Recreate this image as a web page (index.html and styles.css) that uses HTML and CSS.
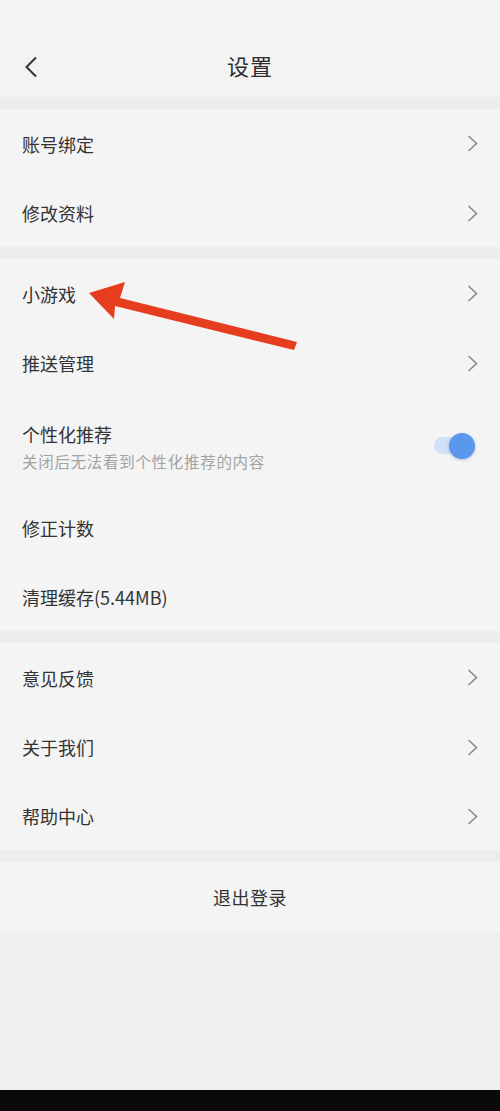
FILE: index.html
```html
<!DOCTYPE html>
<html lang="zh-CN">
<head>
<meta charset="utf-8">
<title>设置</title>
<link rel="stylesheet" href="styles.css">
</head>
<body>
<div class="page">
  <div class="statusbar"></div>
  <header class="header">
    <span class="back">
      <svg width="14" height="22" viewBox="0 0 14 22"><path d="M12 1.5 L2.5 11 L12 20.5" fill="none" stroke="#333" stroke-width="2" stroke-linejoin="miter"/></svg>
    </span>
    <h1 class="title">设置</h1>
  </header>
  <div class="gap"></div>
  <section class="group">
    <div class="row"><span class="label">账号绑定</span><span class="chev"><svg width="11" height="17" viewBox="0 0 11 17"><path d="M1.5 1 L9.5 8.5 L1.5 16" fill="none" stroke="#8a8a8a" stroke-width="1.6"/></svg></span></div>
    <div class="row"><span class="label">修改资料</span><span class="chev"><svg width="11" height="17" viewBox="0 0 11 17"><path d="M1.5 1 L9.5 8.5 L1.5 16" fill="none" stroke="#8a8a8a" stroke-width="1.6"/></svg></span></div>
  </section>
  <div class="gap"></div>
  <section class="group">
    <div class="row"><span class="label">小游戏</span><span class="chev"><svg width="11" height="17" viewBox="0 0 11 17"><path d="M1.5 1 L9.5 8.5 L1.5 16" fill="none" stroke="#8a8a8a" stroke-width="1.6"/></svg></span></div>
    <div class="row"><span class="label">推送管理</span><span class="chev"><svg width="11" height="17" viewBox="0 0 11 17"><path d="M1.5 1 L9.5 8.5 L1.5 16" fill="none" stroke="#8a8a8a" stroke-width="1.6"/></svg></span></div>
    <div class="row row-tall">
      <div class="texts">
        <span class="label">个性化推荐</span>
        <span class="sub">关闭后无法看到个性化推荐的内容</span>
      </div>
      <span class="toggle"><span class="knob"></span></span>
    </div>
    <div class="row"><span class="label">修正计数</span></div>
    <div class="row"><span class="label">清理缓存(5.44MB)</span></div>
  </section>
  <div class="gap"></div>
  <section class="group">
    <div class="row"><span class="label">意见反馈</span><span class="chev"><svg width="11" height="17" viewBox="0 0 11 17"><path d="M1.5 1 L9.5 8.5 L1.5 16" fill="none" stroke="#8a8a8a" stroke-width="1.6"/></svg></span></div>
    <div class="row"><span class="label">关于我们</span><span class="chev"><svg width="11" height="17" viewBox="0 0 11 17"><path d="M1.5 1 L9.5 8.5 L1.5 16" fill="none" stroke="#8a8a8a" stroke-width="1.6"/></svg></span></div>
    <div class="row"><span class="label">帮助中心</span><span class="chev"><svg width="11" height="17" viewBox="0 0 11 17"><path d="M1.5 1 L9.5 8.5 L1.5 16" fill="none" stroke="#8a8a8a" stroke-width="1.6"/></svg></span></div>
  </section>
  <div class="gap"></div>
  <section class="group">
    <div class="row row-center"><span class="label">退出登录</span></div>
  </section>
  <div class="filler"></div>
  <div class="navbar"></div>

  <svg class="annot" width="500" height="1111" viewBox="0 0 500 1111">
    <polygon points="89,293 125,282 120,298 297,342 294,350 115,306 114,319" fill="#e63d1e"/>
  </svg>
</div>
</body>
</html>
```

FILE: styles.css
```css
* { box-sizing: border-box; }
html, body { margin: 0; padding: 0; }
body {
  width: 500px;
  height: 1111px;
  overflow: hidden;
  background: #f3f3f3;
  font-family: "Noto Sans CJK SC", "Noto Sans", sans-serif;
  color: #333;
}
.page {
  position: relative;
  width: 500px;
  height: 1111px;
  display: flex;
  flex-direction: column;
}
.statusbar {
  height: 35px;
  background: #f5f5f5;
  flex: none;
}
.header {
  height: 62px;
  flex: none;
  display: flex;
  align-items: center;
  justify-content: center;
  position: relative;
  background: #f3f3f3;
}
.back {
  position: absolute;
  left: 24px;
  top: 21px;
  display: flex;
}
.title {
  margin: 0;
  font-size: 22px;
  font-weight: 400;
  color: #2c2c2c;
  letter-spacing: 1px;
  margin-top: -3px;
}
.gap {
  height: 12px;
  flex: none;
  background: #ededed;
}
.gap:first-of-type { height: 13px; }
.group {
  background: #f4f4f4;
  flex: none;
  display: flex;
  flex-direction: column;
}
.row {
  height: 69px;
  display: flex;
  align-items: center;
  justify-content: space-between;
  padding: 0 22px 0 22px;
  border-top: 1px solid #f0f0f0;
}
.row:first-child { border-top: none; }
.row-tall {
  height: 96px;
  padding-right: 26px;
}
.row-center { justify-content: center; }
.label {
  font-size: 18px;
  line-height: 24px;
  color: #333;
}
.row-center .label { font-size: 18px; color: #333; letter-spacing: 0.5px; }
.texts {
  display: flex;
  flex-direction: column;
  gap: 5px;
  margin-top: 2px;
}
.sub {
  font-size: 15.5px;
  line-height: 20px;
  color: #a3a3a3;
  letter-spacing: 0.7px;
}
.chev { display: flex; }
.toggle {
  position: relative;
  width: 40px;
  height: 17px;
  border-radius: 9px;
  background: #cfe0f7;
  display: block;
}
.knob {
  position: absolute;
  right: -1px;
  top: -4.5px;
  width: 26px;
  height: 26px;
  border-radius: 50%;
  background: #5b97ec;
  box-shadow: 0 1px 3px rgba(60, 110, 180, 0.35);
}
.filler {
  flex: 1;
  background: #efefef;
}
.navbar {
  height: 21px;
  flex: none;
  background: #0a0a0a;
}
.annot {
  position: absolute;
  left: 0;
  top: 0;
  pointer-events: none;
}
```
